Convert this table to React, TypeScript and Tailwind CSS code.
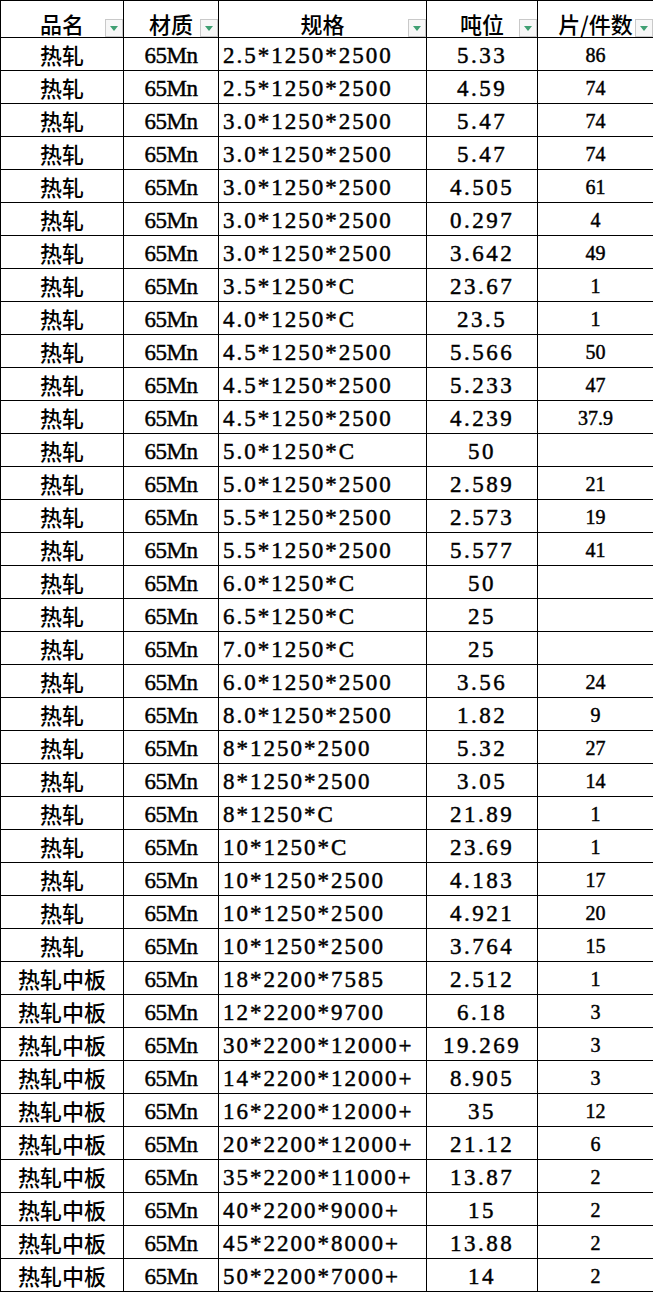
const rows: [string, string, string, string][] = [
  ["热轧", "2.5*1250*2500", "5.33", "86"],
  ["热轧", "2.5*1250*2500", "4.59", "74"],
  ["热轧", "3.0*1250*2500", "5.47", "74"],
  ["热轧", "3.0*1250*2500", "5.47", "74"],
  ["热轧", "3.0*1250*2500", "4.505", "61"],
  ["热轧", "3.0*1250*2500", "0.297", "4"],
  ["热轧", "3.0*1250*2500", "3.642", "49"],
  ["热轧", "3.5*1250*C", "23.67", "1"],
  ["热轧", "4.0*1250*C", "23.5", "1"],
  ["热轧", "4.5*1250*2500", "5.566", "50"],
  ["热轧", "4.5*1250*2500", "5.233", "47"],
  ["热轧", "4.5*1250*2500", "4.239", "37.9"],
  ["热轧", "5.0*1250*C", "50", ""],
  ["热轧", "5.0*1250*2500", "2.589", "21"],
  ["热轧", "5.5*1250*2500", "2.573", "19"],
  ["热轧", "5.5*1250*2500", "5.577", "41"],
  ["热轧", "6.0*1250*C", "50", ""],
  ["热轧", "6.5*1250*C", "25", ""],
  ["热轧", "7.0*1250*C", "25", ""],
  ["热轧", "6.0*1250*2500", "3.56", "24"],
  ["热轧", "8.0*1250*2500", "1.82", "9"],
  ["热轧", "8*1250*2500", "5.32", "27"],
  ["热轧", "8*1250*2500", "3.05", "14"],
  ["热轧", "8*1250*C", "21.89", "1"],
  ["热轧", "10*1250*C", "23.69", "1"],
  ["热轧", "10*1250*2500", "4.183", "17"],
  ["热轧", "10*1250*2500", "4.921", "20"],
  ["热轧", "10*1250*2500", "3.764", "15"],
  ["热轧中板", "18*2200*7585", "2.512", "1"],
  ["热轧中板", "12*2200*9700", "6.18", "3"],
  ["热轧中板", "30*2200*12000+", "19.269", "3"],
  ["热轧中板", "14*2200*12000+", "8.905", "3"],
  ["热轧中板", "16*2200*12000+", "35", "12"],
  ["热轧中板", "20*2200*12000+", "21.12", "6"],
  ["热轧中板", "35*2200*11000+", "13.87", "2"],
  ["热轧中板", "40*2200*9000+", "15", "2"],
  ["热轧中板", "45*2200*8000+", "13.88", "2"],
  ["热轧中板", "50*2200*7000+", "14", "2"],
];

const cjk = "font-['Noto_Sans_CJK_SC',sans-serif]";
// serif digits, thickened a little to get the heavier spreadsheet look
const num = "font-['Liberation_Serif','Noto_Sans_CJK_SC',serif] [-webkit-text-stroke:0.45px_black]";

function FilterButton() {
  return (
    <span className="absolute bottom-0 right-0 flex h-[18px] w-[18px] items-center justify-center border border-[#c9c9c9] bg-[#f7f7f7]">
      <svg width="8" height="5" viewBox="0 0 8 5">
        <path d="M0 0 L8 0 L4 5 Z" fill="#3f9f72" />
      </svg>
    </span>
  );
}

function HeaderCell({ label }: { label: string }) {
  return (
    <th className="relative border border-black p-0 align-bottom font-medium">
      <div className={`pb-[1px] text-center text-[22px] leading-[26px] text-black ${cjk}`}>{label}</div>
      <FilterButton />
    </th>
  );
}

export default function App() {
  return (
    <div className="min-h-screen bg-white">
      <table className="w-[653px] table-fixed border-collapse text-black">
        <colgroup>
          <col className="w-[123px]" />
          <col className="w-[95px]" />
          <col className="w-[208px]" />
          <col className="w-[111px]" />
          <col className="w-[116px]" />
        </colgroup>
        <thead>
          <tr className="h-[37px]">
            {["品名", "材质", "规格", "吨位", "片/件数"].map((h) => (
              <HeaderCell key={h} label={h} />
            ))}
          </tr>
        </thead>
        <tbody>
          {rows.map(([name, spec, weight, count], i) => (
            <tr key={i} className="h-[33px]">
              <td className={`border border-black p-0 text-center text-[22px] font-medium leading-none ${cjk}`}>
                {name}
              </td>
              <td className={`border border-black p-0 pt-[2px] text-center text-[23px] leading-none tracking-[-0.5px] ${num}`}>
                65Mn
              </td>
              <td className={`border border-black pb-0 pl-[4px] pr-0 pt-[2px] text-left text-[23px] leading-none tracking-[2px] ${num}`}>
                {spec}
              </td>
              <td className={`border border-black p-0 pt-[2px] text-center text-[23px] leading-none tracking-[2.5px] ${num}`}>
                {weight}
              </td>
              <td className={`border border-black p-0 pt-[2px] text-center text-[20px] leading-none ${num}`}>
                {count}
              </td>
            </tr>
          ))}
        </tbody>
      </table>
    </div>
  );
}
